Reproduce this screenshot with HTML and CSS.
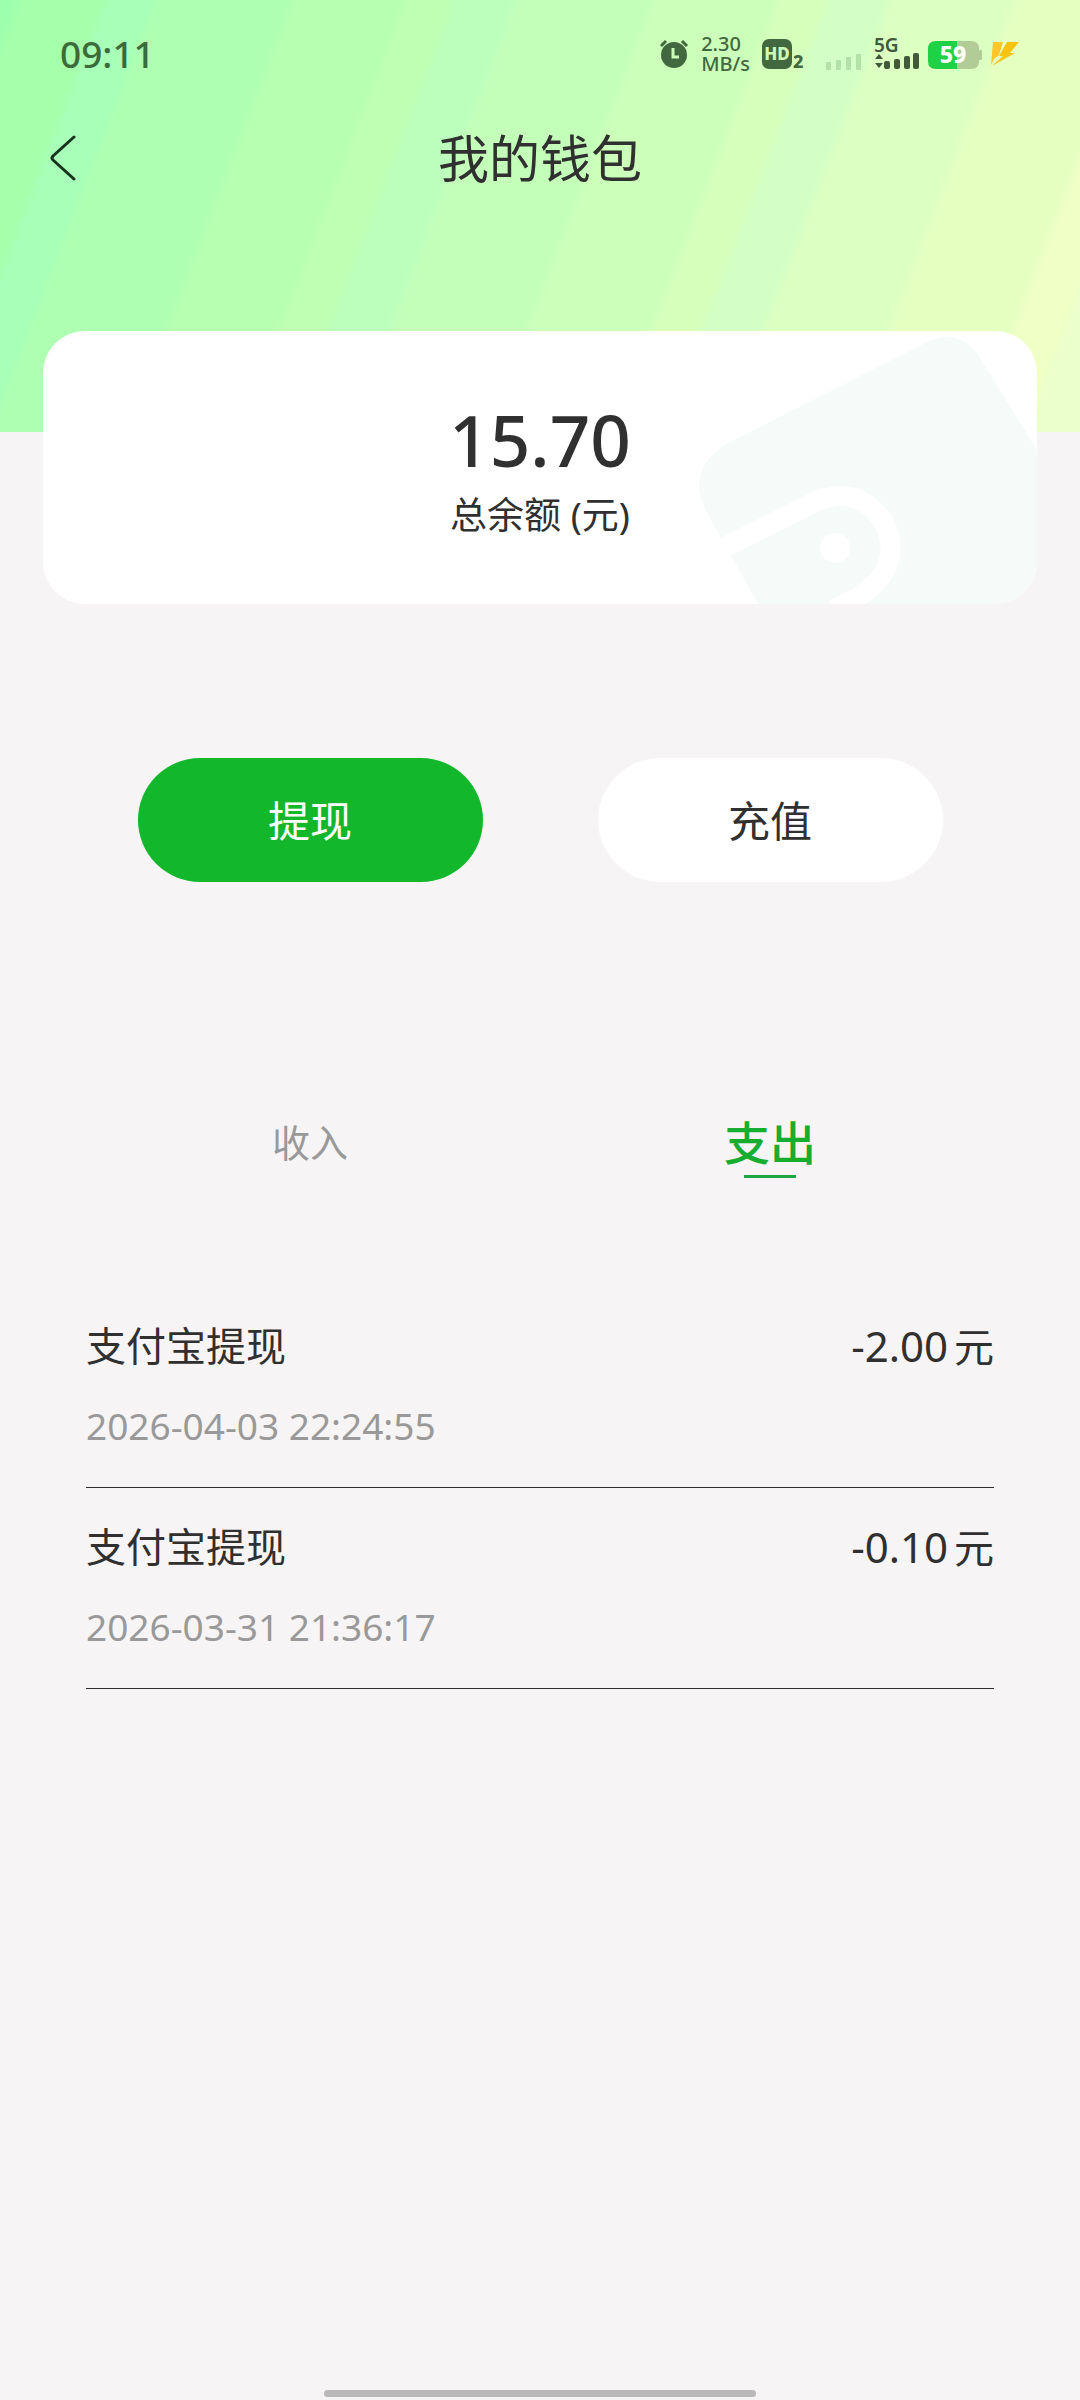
FILE: index.html
```
<!DOCTYPE html>
<html lang="zh-CN">

<head>
    <meta charset="UTF-8">
    <meta name="viewport" content="width=device-width, initial-scale=1.0">
    <title>我的钱包</title>

    <link rel="stylesheet" href="styles.css">
</head>

<body>
    <header class="top">
        <div class="status">
            <span class="time">09:11</span>
            <div class="status_icons">
                <!-- alarm -->
                <svg class="alarm" width="30" height="30" viewBox="0 0 30 30">
                    <circle cx="15" cy="16" r="13" fill="#41683f"/>
                    <path d="M2 7 7 2M28 7 23 2" stroke="#41683f" stroke-width="3" fill="none"/>
                    <path d="M14 9v9h6" stroke="#cdfcba" stroke-width="3" fill="none"/>
                </svg>
                <div class="speed">
                    <span>2.30</span>
                    <span>MB/s</span>
                </div>
                <!-- HD voice, sim 2 -->
                <svg class="hd" width="44" height="34" viewBox="0 0 44 34">
                    <rect x="0" y="2" width="30" height="30" rx="7" fill="#41683f"/>
                    <text x="15" y="23" text-anchor="middle" font-size="17" font-weight="800" fill="#cdfcba">HD</text>
                    <text x="31" y="31" font-size="18" font-weight="800" fill="#41683f">2</text>
                </svg>
                <svg class="signal" width="36" height="16" viewBox="0 0 36 16" fill="#b3e2a6">
                    <rect x="0" y="8" width="5" height="8" rx="1"/>
                    <rect x="10" y="6" width="5" height="10" rx="1"/>
                    <rect x="20" y="3" width="5" height="13" rx="1"/>
                    <rect x="30" y="0" width="5" height="16" rx="1"/>
                </svg>
                <svg class="signal5g" width="46" height="32" viewBox="0 0 46 32" fill="#41583a">
                    <text x="0" y="14" font-size="19" font-weight="600">5G</text>
                    <path d="M5 16l4 5H1zM5 30l4-5H1z"/>
                    <rect x="10" y="23" width="6" height="8" rx="2"/>
                    <rect x="20" y="21" width="6" height="10" rx="2"/>
                    <rect x="30" y="18" width="6" height="13" rx="2"/>
                    <rect x="39" y="15" width="6" height="16" rx="2"/>
                </svg>
                <svg class="battery" width="54" height="28" viewBox="0 0 54 28">
                    <path d="M29 0h14q8 0 8 8v12q0 8-8 8H29z" fill="#b2cc98"/>
                    <path d="M8 0h21v28H8q-8 0-8-8V8q0-8 8-8z" fill="#1fd144"/>
                    <rect x="51" y="9" width="3" height="10" rx="1" fill="#b2cc98"/>
                    <text x="25" y="22" text-anchor="middle" font-size="23" font-weight="800" fill="#fff">59</text>
                </svg>
                <svg class="bolt" width="30" height="24" viewBox="0 0 30 24">
                    <path d="M3 0h10L9 13 4 17 1 23z" fill="#ffc629"/>
                    <path d="M17 0h12L20 11h5L2 24 13 14H9z" fill="#f6c410"/>
                </svg>
            </div>
        </div>

        <div class="nav">
            <button type="button" class="back" aria-label="返回">
                <svg width="26" height="46" viewBox="0 0 26 46">
                    <path d="M24 2 3 21q-2 2 0 4l21 19" fill="none" stroke="#17331f" stroke-width="3" stroke-linecap="round"/>
                </svg>
            </button>
            <h1 class="title">我的钱包</h1>
        </div>
    </header>

    <main>
        <section class="card">
            <!-- wallet watermark -->
            <svg class="wallet" width="340" height="273" viewBox="0 0 340 273">
                <path d="M61 273 9 180Q-12 138 31 112L226 13q36-19 57 14l57 92v154z" fill="#f6faf9"/>
                <path d="M22 219 118 171Q160 153 186 190 210 236 158 268L136 279" fill="none" stroke="#fff" stroke-width="20"/>
                <circle cx="138" cy="217" r="15" fill="#fff"/>
            </svg>
            <p class="balance">15.70</p>
            <p class="label">总余额 (元)</p>
        </section>

        <div class="actions">
            <button type="button" class="btn btn_green">提现</button>
            <button type="button" class="btn">充值</button>
        </div>

        <div class="tabs" role="tablist">
            <button type="button" class="tab" role="tab" aria-selected="false">收入</button>
            <button type="button" class="tab active" role="tab" aria-selected="true">支出</button>
        </div>

        <ul class="list">
            <li class="item">
                <div class="row">
                    <span class="name">支付宝提现</span>
                    <span class="amount">-2.00<span class="unit">元</span></span>
                </div>
                <time class="date">2026-04-03 22:24:55</time>
            </li>
            <li class="item">
                <div class="row">
                    <span class="name">支付宝提现</span>
                    <span class="amount">-0.10<span class="unit">元</span></span>
                </div>
                <time class="date">2026-03-31 21:36:17</time>
            </li>
        </ul>
    </main>

    <div class="home_bar"></div>
</body>

</html>
```
FILE: styles.css
```
* {
    box-sizing: border-box;
    margin: 0;
    padding: 0;
}

body {
    display: flex;
    flex-direction: column;
    min-height: 100vh;
    background-color: #f7f4f5;
    color: #303030;
    font-family: "Noto Sans", "Noto Sans CJK SC", sans-serif;
}

button {
    border: none;
    background: none;
    color: inherit;
    font-family: inherit;
    cursor: pointer;
}

/* header */
.top {
    padding-bottom: 224px;
    background: linear-gradient(111deg,
        #9cffae 0% 1%,
        #a5ffab 2% 8%,
        #a7ffb8 9% 12%,
        #aeffb2 13% 23%,
        #b7ffb1 24% 32%,
        #beffb3 33% 36%,
        #bcffbd 37% 41%,
        #c4ffba 42% 52%,
        #ccffba 53% 62%,
        #d7ffbc 63% 66%,
        #d3ffc6 67% 71%,
        #dcffc2 72% 81%,
        #e5ffc1 82% 91%,
        #f0ffc5 92% 95%,
        #ebffcc 96%);
}

.status {
    display: flex;
    justify-content: space-between;
    align-items: center;
    height: 108px;
    padding: 0 60px;
    color: #3b6b3b;
}

.time {
    font-size: 37px;
    font-weight: 500;
    line-height: 44px;
}

.status_icons {
    display: flex;
    align-items: center;
}

.status_icons svg {
    overflow: visible;
}

.speed {
    display: flex;
    flex-direction: column;
    margin: 0 12px;
    font-size: 20px;
    font-weight: 500;
    line-height: 20px;
    color: #41683f;
}

.signal {
    margin: 16px 12px 0 20px;
}

.battery {
    margin: 2px 8px 0;
}

.nav {
    display: grid;
    grid-template-columns: 1fr auto 1fr;
    align-items: center;
    height: 100px;
    padding: 0 50px;
}

.back {
    justify-self: start;
    height: 46px;
}

.back svg {
    display: block;
}

.title {
    font-size: 51px;
    font-weight: 400;
    line-height: 60px;
}

/* balance */
.card {
    position: relative;
    margin: -101px 43px 0;
    padding: 69px 0 64px;
    border-radius: 42px;
    overflow: hidden;
    background-color: #fff;
    text-align: center;
}

.wallet {
    position: absolute;
    right: 0;
    bottom: 0;
}

.balance {
    font-size: 71px;
    font-weight: 500;
    line-height: 80px;
}

.label {
    margin-top: 10px;
    font-size: 37px;
    line-height: 50px;
}

.actions,
.tabs {
    display: grid;
    grid-template-columns: 1fr 1fr;
    justify-items: center;
    padding: 0 80px;
}

.actions {
    margin-top: 154px;
}

.btn {
    width: 75%;
    height: 124px;
    padding-bottom: 4px;
    border-radius: 62px;
    background-color: #fff;
    font-size: 42px;
}

.btn_green {
    background-color: #12b72b;
    color: #fff;
}

/* tabs */
.tabs {
    margin-top: 230px;
}

.tab {
    height: 66px;
    padding-bottom: 6px;
    font-size: 38px;
    line-height: 60px;
    color: #999;
}

.tab.active {
    padding-bottom: 0;
    font-size: 46px;
    font-weight: 500;
    color: #16ad30;
}

.tab.active::after {
    content: "";
    display: block;
    width: 52px;
    height: 3px;
    margin: 3px auto 0;
    background-color: #20a544;
}

/* records */
.list {
    margin-top: 109px;
    padding: 0 86px;
    list-style: none;
}

.item {
    padding: 29px 0 39px;
    border-bottom: 1px solid #303030;
}

.row {
    display: flex;
    justify-content: space-between;
    align-items: center;
    height: 60px;
    line-height: 60px;
}

.name,
.unit {
    font-size: 40px;
}

.amount {
    font-size: 42px;
}

.unit {
    margin-left: 6px;
}

.date {
    display: block;
    margin-top: 28px;
    font-size: 37px;
    line-height: 44px;
    color: #999;
}

.home_bar {
    width: 40%;
    height: 7px;
    margin: auto auto 3px;
    border-radius: 4px;
    background-color: #b9b9b9;
}
```
